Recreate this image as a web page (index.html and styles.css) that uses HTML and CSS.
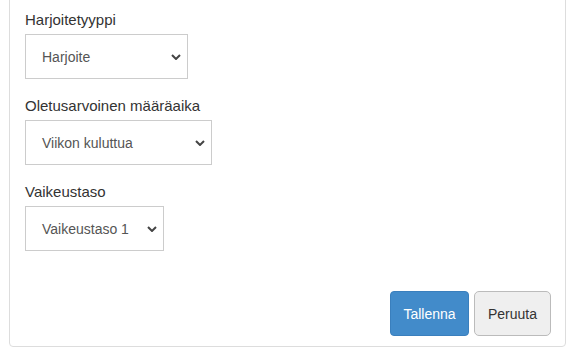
FILE: index.html
```html
<!DOCTYPE html>
<html lang="fi">
<head>
<meta charset="utf-8">
<title>Harjoite</title>
<link rel="stylesheet" href="styles.css">
</head>
<body>
<form class="card">
  <div class="group">
    <label class="label">Harjoitetyyppi</label>
    <div class="select select--type">
      <span class="select__text">Harjoite</span>
      <svg class="chev" viewBox="0 0 10 6" width="10" height="6"><path d="M1 1 L5 5 L9 1" fill="none" stroke="#444" stroke-width="2"/></svg>
    </div>
  </div>
  <div class="group">
    <label class="label">Oletusarvoinen määräaika</label>
    <div class="select select--deadline">
      <span class="select__text">Viikon kuluttua</span>
      <svg class="chev" viewBox="0 0 10 6" width="10" height="6"><path d="M1 1 L5 5 L9 1" fill="none" stroke="#444" stroke-width="2"/></svg>
    </div>
  </div>
  <div class="group">
    <label class="label">Vaikeustaso</label>
    <div class="select select--level">
      <span class="select__text">Vaikeustaso 1</span>
      <svg class="chev" viewBox="0 0 10 6" width="10" height="6"><path d="M1 1 L5 5 L9 1" fill="none" stroke="#444" stroke-width="2"/></svg>
    </div>
  </div>
  <div class="actions">
    <button type="button" class="btn btn--primary">Tallenna</button>
    <button type="button" class="btn btn--default">Peruuta</button>
  </div>
</form>
</body>
</html>
```

FILE: styles.css
```css
html, body {
  margin: 0;
  padding: 0;
  background: #fff;
}
body {
  font-family: "Liberation Sans", Arial, sans-serif;
  color: #333;
  overflow: hidden;
}
.card {
  margin: -5px 10px 0 9px;
  border: 1px solid #ddd;
  border-radius: 4px;
  padding: 13px 14px 10px 15px;
  display: flex;
  flex-direction: column;
}
.group {
  display: flex;
  flex-direction: column;
  align-items: flex-start;
  margin-bottom: 16px;
}
.label {
  font-size: 15px;
  line-height: 21px;
  height: 21px;
  margin-bottom: 4px;
  color: #333;
}
.select {
  box-sizing: border-box;
  height: 45px;
  border: 1px solid #ccc;
  background: #fff;
  display: flex;
  align-items: center;
  justify-content: space-between;
  padding: 0 6px 0 16px;
  font-size: 14px;
  color: #555;
}
.select--type { width: 163px; }
.select--deadline { width: 187px; }
.select--level { width: 139px; }
.chev {
  display: block;
  flex: none;
}
.actions {
  margin-top: 24px;
  display: flex;
  justify-content: flex-end;
  gap: 5px;
}
.btn {
  box-sizing: border-box;
  height: 45px;
  padding: 0 12px;
  font-family: "Liberation Sans", Arial, sans-serif;
  font-size: 14px;
  border-radius: 4px;
  border: 1px solid;
  cursor: pointer;
}
.btn--primary {
  background: #428bca;
  border-color: #3a7fbd;
  color: #fff;
  padding: 0 12px;
  min-width: 79px;
}
.btn--default {
  background: #efefef;
  border-color: #bbb;
  color: #333;
  padding: 0 13px;
  border-radius: 5px;
  min-width: 77px;
}
```
